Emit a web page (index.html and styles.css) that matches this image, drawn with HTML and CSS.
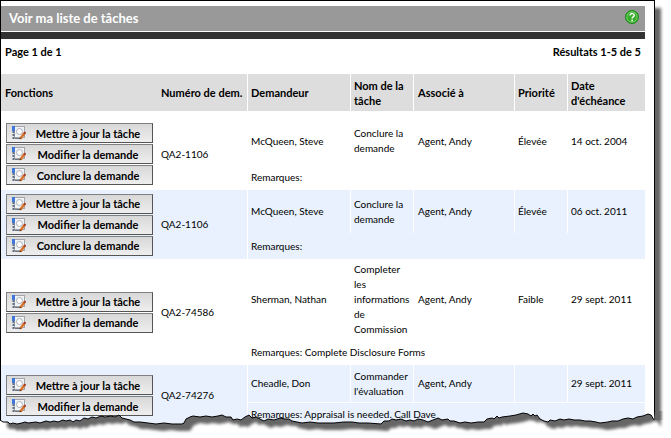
FILE: index.html
```html
<!DOCTYPE html>
<html lang="fr">
<head>
    <meta charset="UTF-8">
    <meta name="viewport" content="width=device-width, initial-scale=1.0">
    <title>Voir ma liste de tâches</title>
    <link rel="stylesheet" href="styles.css">
</head>
<body>
    <svg class="symbols" aria-hidden="true">
        <symbol id="edit" viewBox="0 0 14 14">
            <rect x="2.5" y="0.5" width="10" height="11" fill="#f1f2f4" stroke="#a3a6ad"/>
            <rect x="0" y="0" width="3" height="5" fill="#3f78d8"/>
            <path d="M1.5 5v8" stroke="#5f6c85" stroke-width="2" stroke-dasharray="2 1"/>
            <circle cx="7.5" cy="5.5" r="3" fill="#fff" stroke="#a9adb6"/>
            <path d="M3 12.5h6" stroke="#6f7580"/>
            <path d="M8.500 12.500l4-5.500" stroke="#d9722b" stroke-width="2.500"/>
            <path d="M12 8l1.500-2" stroke="#a33b22" stroke-width="2"/>
            <path d="M7.500 13.500l.5-2 1.500 1z" fill="#5b3a1d"/>
        </symbol>
    </svg>
    <div class="page">
        <div class="frame">
            <div class="title-bar">
                <h1>Voir ma liste de tâches</h1>
                <a class="help" href="#" aria-label="Aide">
                    <svg viewBox="0 0 14 14" width="14" height="14">
                        <circle cx="7" cy="7" r="6.5" fill="#27a51f" stroke="#1c8a18"/>
                        <circle cx="7" cy="7" r="5.200" fill="#35ad28" stroke="#8fd883" stroke-width="0.800"/>
                        <path d="M5 5.500c0-2.600 4.200-2.400 4.200 0 0 1.500-2.100 1.400-2.100 3" fill="none" stroke="#fff" stroke-width="1.500"/>
                        <circle cx="7.100" cy="10.400" r="0.900" fill="#fff"/>
                    </svg>
                </a>
            </div>
            <div class="pager">
                <span>Page 1 de 1</span>
                <span>Résultats 1-5 de 5</span>
            </div>
            <table class="tasks">
                <colgroup>
                    <col class="col-actions">
                    <col class="col-number">
                    <col class="col-requester">
                    <col class="col-task">
                    <col class="col-assigned">
                    <col class="col-priority">
                    <col class="col-date">
                </colgroup>
                <thead>
                    <tr>
                        <th>Fonctions</th>
                        <th class="number">Numéro de dem.</th>
                        <th class="split">Demandeur</th>
                        <th class="split">Nom de la tâche</th>
                        <th class="split assigned">Associé à</th>
                        <th class="split">Priorité</th>
                        <th class="split">Date d'échéance</th>
                    </tr>
                </thead>
                <tbody class="first">
                    <tr class="main">
                        <td rowspan="2">
                            <div class="actions">
                                <button type="button"><svg><use href="#edit"/></svg><span>Mettre à jour la tâche</span></button>
                                <button type="button"><svg><use href="#edit"/></svg><span>Modifier la demande</span></button>
                                <button type="button"><svg><use href="#edit"/></svg><span>Conclure la demande</span></button>
                            </div>
                        </td>
                        <td rowspan="2">QA2-1106</td>
                        <td class="split">McQueen, Steve</td>
                        <td class="split">Conclure la demande</td>
                        <td class="split assigned">Agent, Andy</td>
                        <td class="split">Élevée</td>
                        <td class="split">14 oct. 2004</td>
                    </tr>
                    <tr class="remarks"><td class="split" colspan="5">Remarques:</td></tr>
                </tbody>
                <tbody class="shaded">
                    <tr class="main">
                        <td rowspan="2">
                            <div class="actions">
                                <button type="button"><svg><use href="#edit"/></svg><span>Mettre à jour la tâche</span></button>
                                <button type="button"><svg><use href="#edit"/></svg><span>Modifier la demande</span></button>
                                <button type="button"><svg><use href="#edit"/></svg><span>Conclure la demande</span></button>
                            </div>
                        </td>
                        <td rowspan="2">QA2-1106</td>
                        <td class="split">McQueen, Steve</td>
                        <td class="split">Conclure la demande</td>
                        <td class="split assigned">Agent, Andy</td>
                        <td class="split">Élevée</td>
                        <td class="split">06 oct. 2011</td>
                    </tr>
                    <tr class="remarks"><td class="split" colspan="5">Remarques:</td></tr>
                </tbody>
                <tbody class="tall">
                    <tr class="main">
                        <td rowspan="2">
                            <div class="actions">
                                <button type="button"><svg><use href="#edit"/></svg><span>Mettre à jour la tâche</span></button>
                                <button type="button"><svg><use href="#edit"/></svg><span>Modifier la demande</span></button>
                            </div>
                        </td>
                        <td rowspan="2">QA2-74586</td>
                        <td class="split">Sherman, Nathan</td>
                        <td class="split">Completer les informations de Commission</td>
                        <td class="split assigned">Agent, Andy</td>
                        <td class="split">Faible</td>
                        <td class="split">29 sept. 2011</td>
                    </tr>
                    <tr class="remarks"><td class="split" colspan="5">Remarques: Complete Disclosure Forms</td></tr>
                </tbody>
                <tbody class="shaded ruled">
                    <tr class="main">
                        <td rowspan="2">
                            <div class="actions">
                                <button type="button"><svg><use href="#edit"/></svg><span>Mettre à jour la tâche</span></button>
                                <button type="button"><svg><use href="#edit"/></svg><span>Modifier la demande</span></button>
                            </div>
                        </td>
                        <td rowspan="2">QA2-74276</td>
                        <td class="split">Cheadle, Don</td>
                        <td class="split">Commander l'évaluation</td>
                        <td class="split assigned">Agent, Andy</td>
                        <td class="split"></td>
                        <td class="split">29 sept. 2011</td>
                    </tr>
                    <tr class="remarks"><td class="split" colspan="5">Remarques: Appraisal is needed. Call Dave</td></tr>
                </tbody>
            </table>
        </div>
        <!-- torn paper edge over the bottom of the list -->
        <svg class="torn" viewBox="0 405 671 33" preserveAspectRatio="none" aria-hidden="true">
            <defs>
                <path id="edge" d="M0 419L3 421 8 421 10 423 13 422 17 423 22 422 25 421 28 422 36 421 40 422 46 420 50 421 54 420 58 421 63 419 66 420 70 419 73 421 76 419 80 420 84 417 88 418 92 416 96 417 101 415 105 416 111 415 115 416 119 414 122 417 126 418 130 419 134 421 140 421 148 422 156 423 164 422 172 423 182 423 184 422 186 418 190 416 193 415 200 416 206 415 212 416 218 415 222 414 226 416 231 416 233 419 237 418 241 419 245 416 249 414 252 417 256 416 260 418 264 420 268 418 274 419 280 417 285 418 289 418 292 420 297 421 302 422 310 421 318 422 327 422 334 422 344 421 352 421 359 422 368 422 381 423 384 420 389 420 392 418 396 419 401 418 406 420 410 419 414 420 418 418 423 419 428 421 433 419 438 417 442 419 448 418 450 420 454 420 460 422 465 421 471 422 478 421 484 421 487 418 492 417 494 418 497 415 499 417 502 416 510 415 516 414 523 412 528 413 531 415 533 413 535 415 537 414 540 418 544 420 548 421 550 419 555 420 560 418 564 419 569 418 574 419 580 419 585 420 590 420 596 421 600 422 608 421 612 420 618 420 623 418 628 417 633 418 637 416 643 415 648 413 651 414 654 419"/>
                <clipPath id="below">
                    <path id="cover" d="M0 419L0 438H671V405H655V419Z"/>
                </clipPath>
                <filter id="soft" x="-5%" y="-50%" width="110%" height="200%">
                    <feGaussianBlur stdDeviation="1.5"/>
                </filter>
            </defs>
            <g class="torn-drawing"></g>
        </svg>
    </div>
    <script>
        // the visible line, the paper cut and its shadow all share one edge
        const edge = document.getElementById('edge').getAttribute('d');
        document.getElementById('cover').setAttribute('d', edge + 'L655 410H671V438H0Z');
        document.querySelector('.torn-drawing').innerHTML = `
            <path class="torn-paper" d="${edge}L655 419H671V438H0Z"/>
            <g clip-path="url(#below)">
                <path class="torn-shadow" d="${edge}V380H0Z" transform="translate(7 7)" filter="url(#soft)"/>
            </g>
            <path class="torn-line" d="${edge}"/>`;
    </script>
</body>
</html>
```
FILE: styles.css
```css
body {
    margin: 0;
    background-color: #ffffff;
    color: #000000;
    font-family: "Trebuchet MS", Lato, sans-serif;
    font-size: 11px;
    line-height: 15px;
}
.symbols {
    display: none;
}
.page {
    position: relative;
    padding: 0 16px 8px 0;
}
.frame {
    border: 1px solid #000000;
    border-bottom: none;
    padding: 5px 9px 5px 0;
    box-shadow: 6px 8px 3px #666666;
}
.title-bar {
    display: flex;
    align-items: center;
    justify-content: space-between;
    height: 25px;
    padding: 0 6px 0 8px;
    background-color: #999999;
}
h1 {
    margin: 0;
    color: #ffffff;
    font-size: 13px;
    font-weight: 700;
}
.help {
    display: flex;
    margin-bottom: 4px;
}
.pager {
    display: flex;
    justify-content: space-between;
    margin-top: 1px;
    padding: 5px 4px 15px;
    border-top: 7px solid #333333;
    font-weight: 700;
}
.tasks {
    width: 100%;
    table-layout: fixed;
    border-collapse: separate;
    border-spacing: 0;
}
.col-actions { width: 156px; }
.col-number { width: 90px; }
.col-requester { width: 103px; }
.col-task { width: 63px; }
.col-priority { width: 53px; }
.col-date { width: 78px; }
th, td {
    height: 26px;
    padding: 0 0 0 4px;
    box-sizing: border-box;
    text-align: left;
    vertical-align: middle;
}
th {
    height: 37px;
    background-color: #dddddd;
    font-weight: 700;
}
td {
    font-size: 10px;
}
.number {
    white-space: nowrap;
}
.split {
    border-left: 1px solid #ffffff;
    padding-left: 3px;
}
.assigned {
    padding-left: 4px;
}
.main td {
    height: 43px;
}
.shaded td {
    background-color: #e8f1fd;
}
.first .main td {
    height: 53px;
    padding-top: 7px;
}
.tall .main td {
    height: 80px;
}
.ruled .main td {
    height: 37px;
}
.ruled .remarks td {
    height: 24px;
    border-top: 1px solid #ffffff;
}
.actions {
    display: flex;
    flex-direction: column;
    gap: 1px;
    width: 147px;
    margin-left: 1px;
}
button {
    display: flex;
    align-items: center;
    height: 20px;
    padding: 0 4px 0 5px;
    border: 1px solid #808080;
    border-right-color: #555555;
    border-bottom-color: #555555;
    background: linear-gradient(#d8d8d8, #eeeeee);
    color: #000000;
    font: inherit;
    font-size: 11px;
    font-weight: 700;
    cursor: pointer;
}
button svg {
    flex: none;
    width: 14px;
    height: 14px;
}
button span {
    flex: 1;
    padding-left: 2px;
    white-space: nowrap;
    text-align: center;
}
.torn {
    position: absolute;
    left: 0;
    bottom: 0;
    width: 100%;
    height: 33px;
    pointer-events: none;
}
.torn-paper {
    fill: #ffffff;
}
.torn-shadow {
    fill: #666666;
}
.torn-line {
    fill: none;
    stroke: #000000;
    stroke-width: 1;
}
```
